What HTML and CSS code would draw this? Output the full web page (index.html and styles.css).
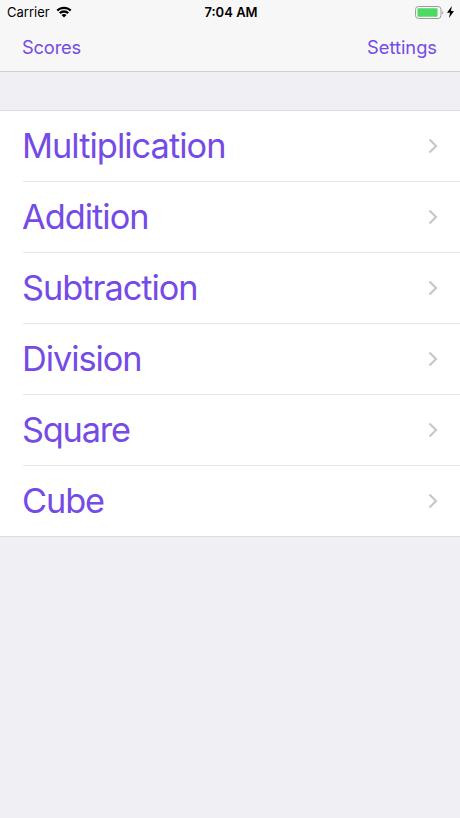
FILE: index.html
```html
<!DOCTYPE html>
<html lang="en">
<head>
<meta charset="utf-8">
<title>Math practice</title>
<link rel="stylesheet" href="styles.css">
</head>
<body>
<header class="top">
  <div class="status">
    <div class="carrier"><span class="carrier-name">Carrier</span>
      <svg class="wifi" width="16" height="12" viewBox="0 0 16 12"><path d="M.5 3.700C4.800-.4 11.200-.4 15.500 3.700L13.900 5.400C10.500 2.300 5.500 2.300 2.100 5.400ZM3 6.300C5.900 3.600 10.100 3.600 13 6.300L11.400 8C9.500 6.300 6.500 6.300 4.600 8ZM5.500 8.900C7 7.700 9 7.700 10.500 8.900L8 11.500Z"/></svg>
    </div>
    <span class="time">7:04 AM</span>
    <div class="power">
      <svg class="battery" width="29" height="13" viewBox="0 0 29 13"><rect x=".5" y=".5" width="25.500" height="12" rx="3" fill="none" stroke="#9c9c9e"/><rect x="2.500" y="2.300" width="20" height="8.400" rx="1" fill="#4cd964"/><path d="M27.200 4.500Q29 6.500 27.200 8.500Z" fill="#9c9c9e"/></svg>
      <svg class="bolt" width="7" height="12" viewBox="0 0 7 12"><path d="M4.800 0L0 6.800H3L2 12L7 5H4Z"/></svg>
    </div>
  </div>
  <nav class="nav"><span class="scores">Scores</span><span class="settings">Settings</span></nav>
</header>
<main class="list">
  <div class="row"><span class="multiplication">Multiplication</span><svg class="chevron" viewBox="0 0 10 16"><path d="M1.500 1.500L8 8L1.500 14.500"/></svg></div>
  <div class="row"><span class="addition">Addition</span><svg class="chevron" viewBox="0 0 10 16"><path d="M1.500 1.500L8 8L1.500 14.500"/></svg></div>
  <div class="row"><span class="subtraction">Subtraction</span><svg class="chevron" viewBox="0 0 10 16"><path d="M1.500 1.500L8 8L1.500 14.500"/></svg></div>
  <div class="row"><span class="division">Division</span><svg class="chevron" viewBox="0 0 10 16"><path d="M1.500 1.500L8 8L1.500 14.500"/></svg></div>
  <div class="row"><span class="square">Square</span><svg class="chevron" viewBox="0 0 10 16"><path d="M1.500 1.500L8 8L1.500 14.500"/></svg></div>
  <div class="row"><span class="cube">Cube</span><svg class="chevron" viewBox="0 0 10 16"><path d="M1.500 1.500L8 8L1.500 14.500"/></svg></div>
</main>
</body>
</html>
```
FILE: styles.css
```css
* { box-sizing: border-box; }
body { margin: 0; background: #efeff4; font-family: Inter, "Liberation Sans", sans-serif; color: #000; }
.top { height: 72px; background: #f7f7f8; border-bottom: 1px solid #cfcfd1; }
.status { height: 24px; display: grid; grid-template-columns: 1fr auto 1fr; align-items: center; padding: 0 6px 0 7px; font-size: 13px; }
.carrier { display: flex; align-items: center; gap: 6px; }
.wifi { margin-bottom: 1px; }
.time { font-weight: 600; padding-left: 1px; }
.power { display: flex; justify-content: flex-end; align-items: center; gap: 3px; }
.nav { height: 46px; display: flex; justify-content: space-between; align-items: center; padding: 0 23px 0 22px; font-size: 18.3px; color: #744be6; }
.scores { letter-spacing: -0.15px; }
.settings { letter-spacing: 0; }
.list { margin-top: 38px; background: #fff; border-top: 1px solid #dcdce0; border-bottom: 1px solid #dcdce0; }
.row { height: 71px; margin-left: 23px; padding-right: 22px; display: flex; align-items: center; justify-content: space-between; border-bottom: 1px solid #e6e6e9; font-size: 34.3px; color: #744be6; }
.row:last-child { height: 70px; border-bottom: 0; }
.row span { margin: 0 0 2px -1px; }
.multiplication { letter-spacing: -0.95px; }
.addition { letter-spacing: -0.97px; }
.subtraction { letter-spacing: -1px; }
.division { letter-spacing: -1.05px; }
.square { letter-spacing: -1.2px; }
.cube { letter-spacing: -1.1px; }
.chevron { width: 10px; height: 16px; margin-bottom: 1px; fill: none; stroke: #c7c7cc; stroke-width: 2.2; }
```
